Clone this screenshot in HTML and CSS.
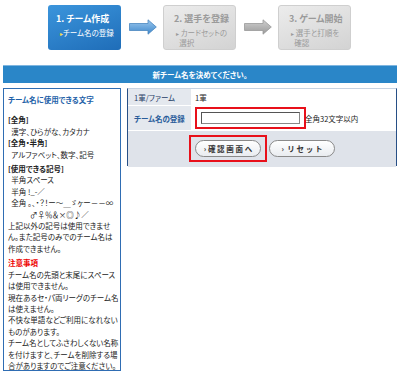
FILE: index.html
```html
<!DOCTYPE html>
<html>
<head>
  <meta charset="utf-8">
  <title>チーム作成</title>
  <link rel="stylesheet" href="styles.css">
</head>
<body>
  <div class="steps">
    <div class="step step-on">
      <div class="step-title">1. チーム作成</div>
      <div class="step-sub"><span class="tri">&#9656;</span>チーム名の登録</div>
    </div>
    <svg class="arrow" width="28" height="16" viewBox="0 0 28 16">
      <defs>
        <linearGradient id="ab" x1="0" y1="0" x2="0" y2="1">
          <stop offset="0" stop-color="#9cc8ee"/>
          <stop offset="1" stop-color="#3f88cc"/>
        </linearGradient>
      </defs>
      <path d="M0.5 4.5 H19 V0.8 L27.3 8 L19 15.2 V11.5 H0.5 Z" fill="url(#ab)" stroke="#4a86bf" stroke-width="0.8"/>
    </svg>
    <div class="step step-off">
      <div class="step-title">2. 選手を登録</div>
      <div class="step-sub"><span class="tri">&#9656;</span> カードセットの<br>&nbsp;&nbsp;選択</div>
    </div>
    <svg class="arrow" width="28" height="16" viewBox="0 0 28 16">
      <defs>
        <linearGradient id="ag" x1="0" y1="0" x2="0" y2="1">
          <stop offset="0" stop-color="#d0d0d0"/>
          <stop offset="1" stop-color="#9a9a9a"/>
        </linearGradient>
      </defs>
      <path d="M0.5 4.5 H19 V0.8 L27.3 8 L19 15.2 V11.5 H0.5 Z" fill="url(#ag)" stroke="#999" stroke-width="0.8"/>
    </svg>
    <div class="step step-off">
      <div class="step-title">3. ゲーム開始</div>
      <div class="step-sub"><span class="tri">&#9656;</span> 選手と打順を<br>&nbsp;&nbsp;確認</div>
    </div>
  </div>

  <div class="titlebar">新チーム名を決めてください。</div>

  <div class="main">
    <div class="side">
      <div class="side-title">チーム名に使用できる文字</div>
      <div class="blk">
        <b>[全角]</b><br>
        &nbsp;&nbsp;漢字、ひらがな、カタカナ<br>
        <b>[全角・半角]</b><br>
        &nbsp;&nbsp;アルファベット、数字、記号
      </div>
      <div class="blk gap">
        <b>[使用できる記号]</b><br>
        &nbsp;&nbsp;半角スペース<br>
        &nbsp;&nbsp;半角 !_-／<br>
        &nbsp;&nbsp;全角 。、・？！ー～＿ゞヶー－－∞<br>
        <span class="ind">♂♀％＆×◎♪／</span><br>
        上記以外の記号は使用できませ<br>
        ん。また記号のみでのチーム名は<br>
        作成できません。
      </div>
      <div class="blk gap">
        <b class="red">注意事項</b><br>
        チーム名の先頭と末尾にスペース<br>
        は使用できません。<br>
        現在あるセ・パ両リーグのチーム名<br>
        は使えません。<br>
        不快な単語などご利用になれない<br>
        ものがあります。<br>
        チーム名としてふさわしくない名称<br>
        を付けますと、チームを削除する場<br>
        合がありますのでご注意ください。
      </div>
    </div>

    <div class="form">
      <div class="row">
        <div class="lbl">1軍/ファーム</div>
        <div class="val">1軍</div>
      </div>
      <div class="row">
        <div class="lbl lbl-strong">チーム名の登録</div>
        <div class="val">
          <span class="mark"><input class="name" type="text"></span><span class="note">全角32文字以内</span>
        </div>
      </div>
      <div class="btnrow">
        <span class="mark mark-btn"><button class="pill">&#8250; 確 認 画 面 へ</button></span>
        <button class="pill">&#8250;&nbsp;&nbsp;リ セ ッ ト</button>
      </div>
    </div>
  </div>
</body>
</html>
```

FILE: styles.css
```css
* {
  box-sizing: border-box;
}

body {
  margin: 0;
  background: #fff;
  font-family: "Noto Sans CJK JP", "DejaVu Sans", sans-serif;
  font-size: 7.5px;
  font-feature-settings: "palt";
  color: #222;
}

/* progress steps */
.steps {
  display: flex;
  align-items: center;
  padding: 3px 0 0 48px;
  height: 51px;
}

.step {
  width: 73px;
  height: 45px;
  border-radius: 3px;
  padding: 8px 0 0 8px;
}

.step-on {
  background: linear-gradient(160deg, #3b95dc, #1f6db8);
  color: #fff;
}

.step-off {
  background: linear-gradient(160deg, #ececec, #d3d3d3);
  border: 1px solid #cfcfcf;
  color: #9a9a9a;
  padding: 7px 0 0 10px;
}

.step-title {
  font-size: 9px;
  font-weight: bold;
  line-height: 12px;
}

.step-sub {
  margin-top: 3px;
  line-height: 9px;
  font-size: 7.5px;
  padding-left: 4px;
}

.step-off .step-sub {
  padding-left: 2px;
}

.tri {
  font-size: 6px;
}

.step-on .tri {
  color: #ffe14a;
}

.arrow {
  margin: 0 6px 0 8px;
}

/* title bar */
.titlebar {
  margin: 14px 3px 0;
  height: 18px;
  line-height: 17px;
  background: #2a86c8;
  border-top: 1px solid #7fb6e0;
  color: #fff;
  font-weight: bold;
  font-size: 7.5px;
  text-align: center;
}

/* main area */
.main {
  display: flex;
  align-items: flex-start;
  gap: 6px;
  margin: 5px 3px 0;
}

.side {
  width: 118px;
  height: 283px;
  border: 1px solid #2f6db3;
  padding: 5px 0 0 4px;
  line-height: 11.4px;
  white-space: nowrap;
  overflow: hidden;
}

.side-title {
  color: #1d5fa8;
  font-weight: bold;
  margin-bottom: 9px;
}

.gap {
  margin-top: 3px;
}

.ind {
  padding-left: 22px;
}

.red {
  color: #e00;
}

.form {
  flex: 1;
  height: 78px;
  border-left: 1px solid #274f86;
  border-right: 1px solid #274f86;
  border-top: 1px solid #c7d3e2;
}

.row {
  display: flex;
  border-bottom: 1px solid #fff;
}

.lbl {
  width: 63px;
  background: #e4e8ee;
  color: #1f3c66;
  padding-left: 6px;
  display: flex;
  align-items: center;
}

.lbl-strong {
  color: #2a5c9a;
  font-weight: bold;
}

.val {
  flex: 1;
  padding-left: 4px;
  display: flex;
  align-items: center;
}

.row:first-child .lbl,
.row:first-child .val {
  height: 16px;
}

.row:nth-child(2) .lbl,
.row:nth-child(2) .val {
  height: 24px;
}

.mark {
  display: inline-block;
  border: 2px solid #e8101a;
  padding: 3px 4px;
}

.name {
  width: 99px;
  height: 12px;
  border: 1px solid #888;
  border-top-color: #555;
  border-left-color: #555;
  padding: 0;
  display: block;
}

.note {
  margin-left: -1px;
}

.btnrow {
  background: #dfe3ea;
  height: 36px;
  display: flex;
  justify-content: center;
  align-items: center;
  gap: 2px;
  padding-bottom: 2px;
}

.mark-btn {
  padding: 3px 4px;
}

.pill {
  width: 66px;
  height: 17px;
  border: 1px solid #8a8a8a;
  border-radius: 9px;
  background: linear-gradient(#ffffff, #e9ecf0);
  font-family: "Noto Sans CJK JP", sans-serif;
  font-size: 7.5px;
  font-weight: bold;
  color: #333;
  padding: 0;
  text-align: center;
  display: block;
}
```
